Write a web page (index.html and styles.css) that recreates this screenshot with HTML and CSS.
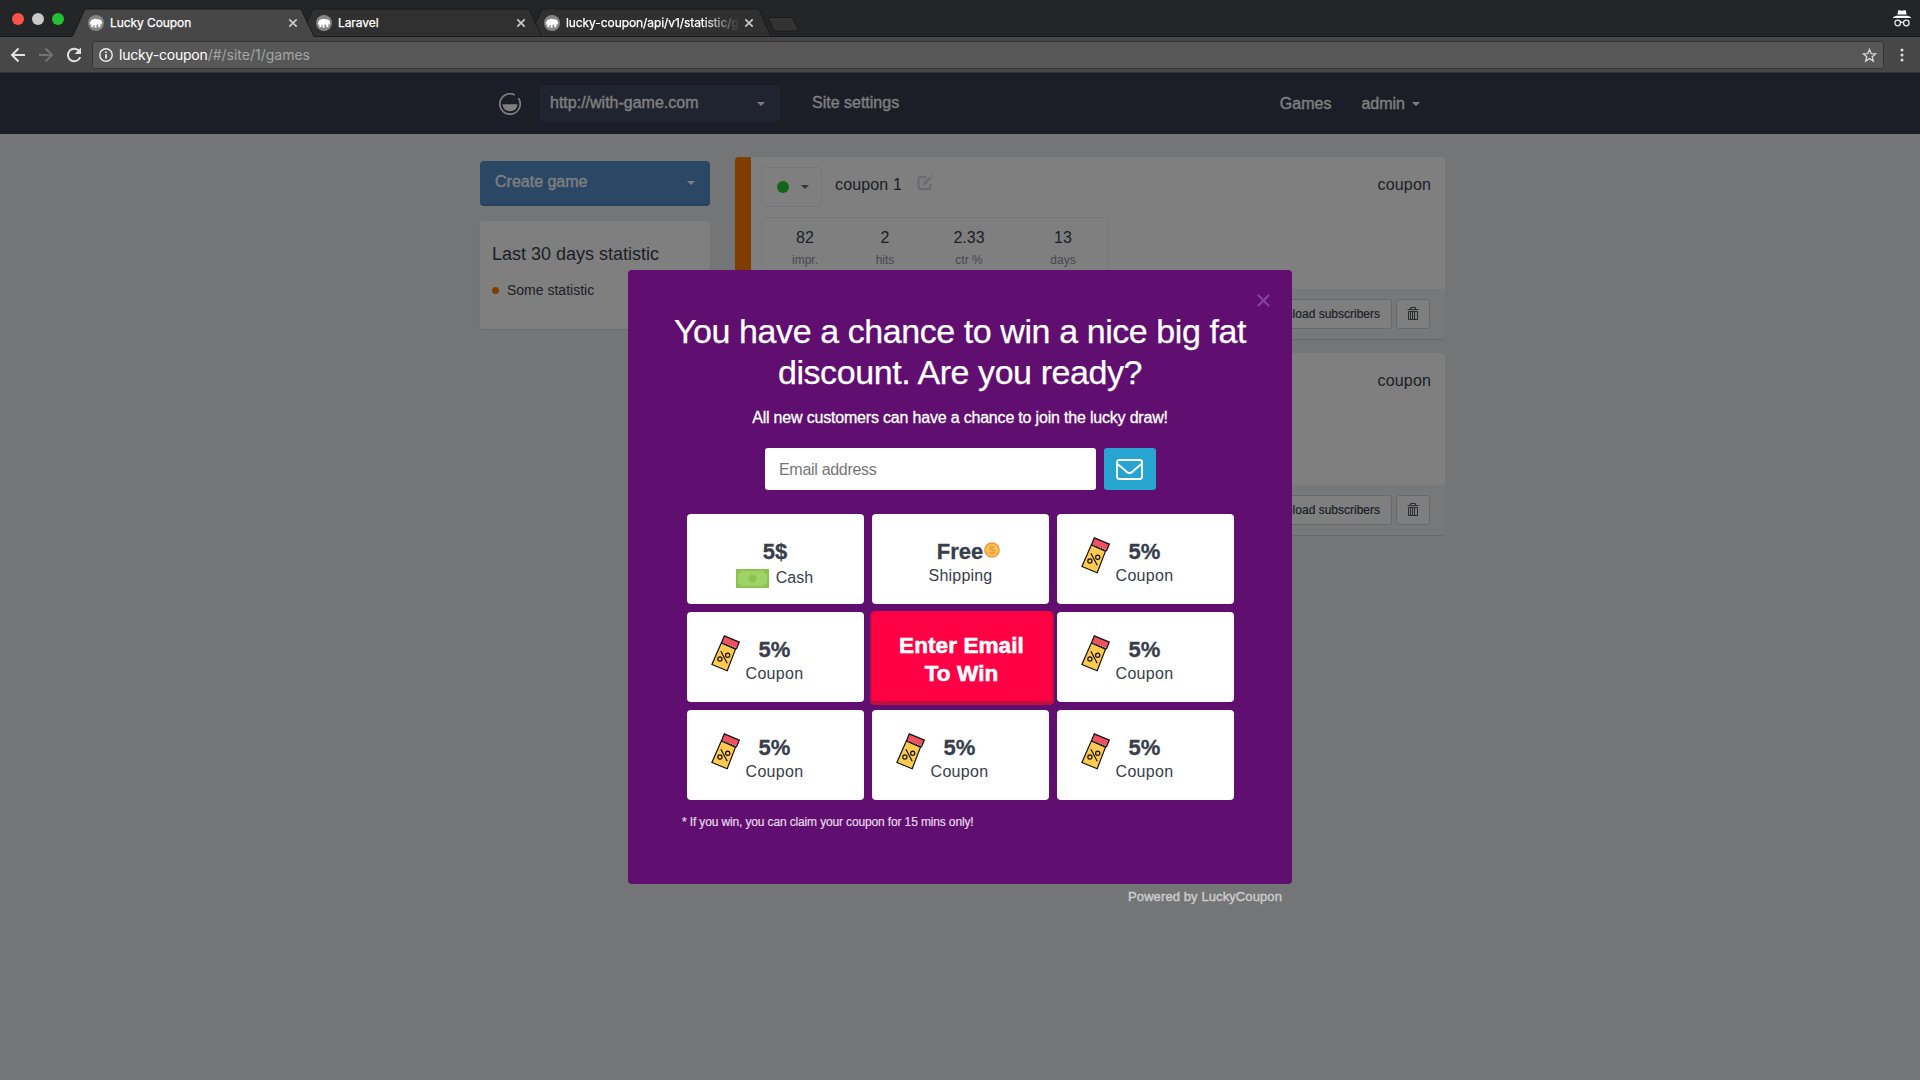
FILE: index.html
```html
<!DOCTYPE html>
<html lang="en">
<head>
<meta charset="utf-8">
<title>Lucky Coupon</title>
<link rel="stylesheet" href="styles.css">
</head>
<body>
<svg class="defs" width="0" height="0">
  <symbol id="favicon" viewBox="0 0 16 16">
    <circle cx="8" cy="8" r="8" fill="#858585"/>
    <path d="M1.800 9.300C2 6 3.600 4.300 6 4.200c1-.6 2.300-.5 3 .1 2.300-.6 4.900.6 5 3 .1 1-.1 1.900-.5 2.400l-.5-1.400c-.4.9-.6 2.700-.7 3.900h-2.100V9.600l-1.700.2v3H6.600v-2.600l-1-.5-.4 2.600H3.300c.1-1.500 0-2.700-.3-3.700l-.5 1.400z" fill="#fff"/>
  </symbol>
  <symbol id="close" viewBox="0 0 10 10"><path d="M1.300 1.300l7.400 7.400M8.700 1.300L1.300 8.700" stroke="#c8c8c8" stroke-width="1.700"/></symbol>
  <symbol id="trash" viewBox="0 0 12 14">
    <path d="M.5 2.500h11M3.500 2.500v-2h5v2M1.500 4.500v8h9v-8zM3.500 4.500v8M5.500 4.500v8M7.500 4.500v8" fill="none" stroke="#555860" stroke-width="1"/>
  </symbol>
  <symbol id="coupon" viewBox="0 0 30 38">
    <path d="M10.300 8L.9 29.500l15.300 6.200 8.300-21.600z" fill="#ffca4f" stroke="#111" stroke-width="1.200"/>
    <path d="M13.300.9l15 6.200-2.400 6L10.500 7.500z" fill="#ef5160"/>
    <path d="M10.400 8l2.900-7.100 15 6.200-2.600 6.300-1.200.8" fill="none" stroke="#111" stroke-width="1.200"/>
    <path d="M10.500 7.900l15 5.600" fill="none" stroke="#111" stroke-width="1.200" stroke-dasharray="1.300 1.200"/>
    <g fill="none" stroke="#111" stroke-width="1.200"><path d="M9.900 16.200l6.300 12"/><circle cx="8.900" cy="24" r="2.100"/><circle cx="16.700" cy="20.300" r="2.100"/></g>
  </symbol>
</svg>
<div class="browser">
  <div class="tabstrip">
    <div class="lights"><i class="red"></i><i class="grey"></i><i class="green"></i></div>
    <svg class="tab-shapes" width="740" height="37" viewBox="70 0 740 37">
      <path d="M529 37l13-28h217l12 28z" fill="#303030" stroke="#1a1a1b"/>
      <path d="M300 37l13-28h216l13 28z" fill="#303030" stroke="#1a1a1b"/>
      <path d="M70 36.500h740" stroke="#18191a"/>
      <path d="M71 37.500l1.500-1 12.500-27.500h216l13 27.500 1.500 1z" fill="#474747" stroke="#1a1a1b"/>
      <path d="M72 37h242" stroke="#474747" stroke-width="1.500"/>
      <path d="M768 17.500h24l7 13.500h-25z" fill="#333" stroke="#1c1c1d"/>
    </svg>
    <div class="tab t1"><svg class="fav"><use href="#favicon"/></svg><span class="title">Lucky Coupon</span><svg class="x"><use href="#close"/></svg></div>
    <div class="tab t2"><svg class="fav"><use href="#favicon"/></svg><span class="title">Laravel</span><svg class="x"><use href="#close"/></svg></div>
    <div class="tab t3"><svg class="fav"><use href="#favicon"/></svg><span class="title fade">lucky-coupon/api/v1/statistic/g</span><svg class="x"><use href="#close"/></svg></div>
    <svg class="incognito" width="18" height="17" viewBox="0 0 18 17"><path d="M5.500 0l3.500.8L12.500 0l1.200 4.600H4.300z M3 5.800h12l3 1.500v.7H0v-.7z" fill="#fff"/><g fill="none" stroke="#e8e8e8" stroke-width="1.300"><circle cx="4.700" cy="13" r="2.800"/><circle cx="13.300" cy="13" r="2.800"/><path d="M7.500 12.600q1.500-1 3 0"/></g></svg>
  </div>
  <div class="toolbar">
    <svg class="nav-icons" width="92" height="36" viewBox="0 37 92 36" fill="none" stroke-width="2">
      <path d="M25 55H12.500M18.500 48.500L12 55l6.500 6.500" stroke="#e2e2e2"/>
      <path d="M39 55h12.500M45.500 48.500L52 55l-6.500 6.500" stroke="#727272"/>
      <path d="M79.500 51.500A6.300 6.300 0 1 0 80.200 57" stroke="#e2e2e2"/><path d="M81 47.500v6.500h-6.500z" fill="#e2e2e2"/>
    </svg>
    <div class="omnibox">
      <svg width="14" height="14" viewBox="0 0 14 14"><circle cx="7" cy="7" r="6.200" fill="none" stroke="#f0f0f0" stroke-width="1.400"/><path d="M7 6.200v4.200M7 3.400v1.700" stroke="#f0f0f0" stroke-width="1.800"/></svg>
      <span class="url"><b class="host">lucky-coupon</b><span class="path">/#/site/1/games</span></span>
      <svg class="star" width="15" height="15" viewBox="0 0 15 15"><path d="M7.500 1.500l1.700 4.100 4.400.3-3.400 2.800 1.100 4.300-3.800-2.400L3.700 13l1.100-4.300L1.400 5.900l4.400-.3z" fill="none" stroke="#d8d8d8" stroke-width="1.300"/></svg>
    </div>
    <svg class="menu" width="4" height="14" viewBox="0 0 4 14" fill="#ddd"><circle cx="2" cy="2" r="1.500"/><circle cx="2" cy="7" r="1.500"/><circle cx="2" cy="12" r="1.500"/></svg>
  </div>
</div>
<div class="viewport">
  <nav class="navbar">
    <svg class="logo" width="22" height="22" viewBox="0 0 22 22"><path d="M15.700 1.900A10.200 10.200 0 1 0 19.500 5.300" fill="none" stroke="#fff" stroke-width="1.700"/><path d="M3.500 11.200h15a7.500 7 0 0 1-15 0z" fill="#fff"/></svg>
    <div class="site-select"><span>http://with-game.com</span><i class="caret"></i></div>
    <a class="settings">Site settings</a>
    <a class="games">Games</a>
    <a class="admin">admin</a><i class="caret"></i>
  </nav>
  <main class="container">
    <aside>
      <div class="create"><span>Create game</span><i class="caret"></i></div>
      <section class="stat-card"><h2>Last 30 days statistic</h2><p><i></i><span>Some statistic</span></p></section>
    </aside>
    <div class="list">
      <article class="game">
        <div class="body">
          <div class="row">
            <div class="status"><i class="on"></i><i class="caret"></i></div>
            <span class="name">coupon 1</span>
            <svg class="edit" width="18" height="16" viewBox="0 0 18 16" fill="none" stroke="#d4d6de" stroke-width="2.200"><path d="M9 2.100H4a2.500 2.500 0 0 0-2.500 2.500v7A2.500 2.500 0 0 0 4 14.100h7a2.500 2.500 0 0 0 2.500-2.500V9"/><path d="M6.500 9.500l7-7" stroke-width="3"/><path d="M15 1.700l1-1" stroke-width="2.600"/></svg>
            <span class="kind">coupon</span>
          </div>
          <dl class="stats"><div class="c1"><dt>82</dt><dd>impr.</dd></div><div class="c2"><dt>2</dt><dd>hits</dd></div><div class="c3"><dt>2.33</dt><dd>ctr %</dd></div><div class="c4"><dt>13</dt><dd>days</dd></div></dl>
        </div>
        <footer><a class="btn">Download subscribers</a><a class="btn icon"><svg width="12" height="14"><use href="#trash"/></svg></a></footer>
      </article>
      <article class="game">
        <div class="body"><div class="row"><span class="kind">coupon</span></div></div>
        <footer><a class="btn">Download subscribers</a><a class="btn icon"><svg width="12" height="14"><use href="#trash"/></svg></a></footer>
      </article>
    </div>
  </main>
  <div class="overlay">
    <div class="modal">
      <svg class="dismiss" width="13" height="13" viewBox="0 0 13 13"><path d="M.8.8l11.400 11.400M12.200.8L.8 12.200" stroke="#85429a" stroke-width="2.200"/></svg>
      <h1>You have a chance to win a nice big fat<br>discount. Are you ready?</h1>
      <p class="lead">All new customers can have a chance to join the lucky draw!</p>
      <div class="form">
        <div class="input">Email address</div>
        <div class="send"><svg width="27" height="21" viewBox="0 0 27 21" fill="none" stroke="#fff" stroke-width="1.900"><rect x="1" y="1" width="25" height="19" rx="2.200"/><path d="M1 4.500c4 3.500 7 5.800 9.500 8.200q3 2.800 6 0C19 10.300 22 8 26 4.500"/></svg></div>
      </div>
      <div class="grid">
        <div class="cell cash"><b>5$</b><span class="line"><svg width="33" height="19" viewBox="0 0 33 19"><path d="M0 0h33v19H0z" fill="#8cc350"/><path d="M5 2h23q0 3 3 3v9q-3 0-3 3H5q0-3-3-3V5q3 0 3-3z" fill="#a0d367"/><circle cx="16.500" cy="9.500" r="4" fill="#8cc350"/></svg><em>Cash</em></span></div>
        <div class="cell ship"><b><span>Free</span><svg width="16" height="16" viewBox="0 0 16 16"><circle cx="8" cy="8" r="7.100" fill="#fdc44d" stroke="#eb9a45" stroke-width="1.500"/><text x="8" y="12" text-anchor="middle">$</text></svg></b><em>Shipping</em></div>
        <div class="cell pct"><svg width="30" height="38"><use href="#coupon"/></svg><b>5%</b><em>Coupon</em></div>
        <div class="cell pct"><svg width="30" height="38"><use href="#coupon"/></svg><b>5%</b><em>Coupon</em></div>
        <div class="cell go"><span>Enter Email</span><span>To Win</span></div>
        <div class="cell pct"><svg width="30" height="38"><use href="#coupon"/></svg><b>5%</b><em>Coupon</em></div>
        <div class="cell pct"><svg width="30" height="38"><use href="#coupon"/></svg><b>5%</b><em>Coupon</em></div>
        <div class="cell pct"><svg width="30" height="38"><use href="#coupon"/></svg><b>5%</b><em>Coupon</em></div>
        <div class="cell pct"><svg width="30" height="38"><use href="#coupon"/></svg><b>5%</b><em>Coupon</em></div>
      </div>
      <p class="note">* If you win, you can claim your coupon for 15 mins only!</p>
    </div>
    <p class="powered">Powered by LuckyCoupon</p>
  </div>
</div>
</body>
</html>
```
FILE: styles.css
```css
* { box-sizing: border-box; margin: 0; padding: 0; }
html, body { height: 1080px; overflow: hidden; }
body { position: relative; background: #e8eaee; font-family: "Liberation Sans", Arial, sans-serif; font-size: 16px; color: #383e4b; display: flex; flex-direction: column; }
i, em { font-style: normal; }
.defs { position: absolute; }

/* browser window */
.browser { font-family: Inter, Roboto, sans-serif; color: #fff; }
.tabstrip { position: relative; height: 37px; background: #242527; border-bottom: 1px solid #18191a; display: flex; align-items: flex-start; padding: 0 9px 0 12px; }
.lights { display: flex; gap: 8px; padding-top: 13px; width: 76px; z-index: 1; }
.lights i { width: 12px; height: 12px; border-radius: 50%; }
.red { background: #fc504a; }
.grey { background: #c9c9c9; }
.green { background: #23c234; }
.tab-shapes { position: absolute; left: 70px; top: 0; }
.tab { z-index: 1; display: flex; align-items: center; height: 28px; margin-top: 9px; width: 228px; font-size: 12px; }
.t3 { width: 227px; }
.fav { width: 16px; height: 16px; margin-right: 6px; flex: none; }
.title { white-space: nowrap; letter-spacing: -.08px; margin-top: -1px; -webkit-text-stroke: .25px #fff; }
.fade { width: 174px; overflow: hidden; mask-image: linear-gradient(90deg, #000 78%, transparent); }
.tab .x { width: 10px; height: 10px; margin-left: auto; margin-right: 18px; flex: none; }
.t3 .x { margin-right: 17px; }
.incognito { margin: 10px 0 0 auto; }
.toolbar { height: 36px; background: #474747; border-bottom: 1px solid #323233; display: flex; align-items: flex-start; }
.omnibox { width: 1792px; height: 28px; margin-top: 4px; border: 1px solid #353535; border-radius: 3px; background: #575757; display: flex; align-items: center; padding: 0 6px; }
.url { margin: -1px 0 0 6px; font-size: 14px; }
.host { font-weight: 400; letter-spacing: -.2px; }
.path { color: #a5a5a5; }
.star { margin-left: auto; }
.menu { margin: 11px 0 0 16px; }

/* page */
.viewport { position: relative; flex: 1; }
.navbar { height: 61px; background: #383d4e; padding: 0 500px 0 499px; display: flex; align-items: center; color: #fff; line-height: 20px; }
.logo { margin-top: 1px; }
.caret { width: 0; height: 0; border: 4px solid transparent; border-top-color: currentColor; border-bottom: 0; }
.site-select { width: 240px; height: 37px; margin-left: 19px; background: #414960; border-radius: 4px; padding: 0 15px 0 10px; display: flex; align-items: center; justify-content: space-between; }
.site-select span, .settings, .games, .admin { -webkit-text-stroke: .3px; }
.site-select span, .settings { margin-top: -2px; }
.settings { margin-left: 32px; }
.games { margin-left: auto; }
.admin { margin-left: 30px; }
.admin + .caret { margin-left: 7px; }
.container { width: 965px; margin-left: 480px; display: flex; gap: 25px; align-items: flex-start; padding-top: 23px; }
aside { width: 230px; padding-top: 4px; }
.create { height: 45px; background: #548ecb; border-bottom: 2px solid #4680bd; border-radius: 4px; color: #fff; padding: 0 15px; display: flex; align-items: center; justify-content: space-between; -webkit-text-stroke: .3px; }
.create span { margin-top: -1px; }
.stat-card { margin-top: 15px; height: 108px; background: #fff; border-radius: 4px; padding: 23px 12px; box-shadow: 0 1px 1px #d4d6da; }
.stat-card h2 { font-size: 18px; font-weight: 400; line-height: 20px; }
.stat-card p { display: flex; align-items: center; gap: 8px; font-size: 14px; line-height: 20px; margin-top: 16px; }
.stat-card i { width: 7px; height: 7px; border-radius: 50%; background: #ff7d00; }
.list { width: 710px; }
.game { height: 182px; margin-bottom: 14px; background: #fff; border-left: 16px solid #ff7d00; border-radius: 4px; display: flex; flex-direction: column; box-shadow: 0 1px 1px #d0d2d6; }
.body { height: 132px; padding: 10px 14px 0 10px; overflow: hidden; flex: none; }
.row { display: flex; height: 40px; }
.status { width: 61px; height: 40px; border: 1px solid #eceef2; border-radius: 4px; display: flex; align-items: center; padding-left: 15px; }
.status .caret { color: #666a74; }
.on { width: 12px; height: 12px; border-radius: 50%; background: #24c82e; margin-right: 12px; }
.name, .kind { line-height: 36px; letter-spacing: .15px; }
.name { margin-left: 13px; }
.edit { margin: 8px 0 0 15px; }
.kind { margin-left: auto; }
.stats { width: 347px; height: 70px; margin-top: 10px; border: 1px solid #eceef2; border-radius: 4px; padding: 8px 0 0 3px; display: flex; text-align: center; }
.c1 { width: 80px; } .c2 { width: 80px; } .c3 { width: 88px; } .c4 { width: 100px; margin-right: -5px; }
.stats div { flex: none; }
.stats dt { line-height: 24px; }
.stats dd { font-size: 12px; line-height: 18px; margin-top: 1px; color: #8d93a0; }
.game footer { flex: 1; background: #eff1f5; border-radius: 0 0 4px 0; display: flex; justify-content: flex-end; gap: 4px; padding: 10px 15px; }
.btn { height: 30px; border: 1px solid #d0d2d8; border-radius: 3px; background: #fff; font-size: 12px; line-height: 28px; padding: 0 11px; -webkit-text-stroke: .2px; }
.icon { width: 34px; padding: 7px 0 0 10px; line-height: 0; }

/* popup */
.overlay { position: absolute; inset: 0; background: rgba(0, 0, 0, .5); padding: 197px 0 0 628px; }
.modal { position: relative; width: 664px; height: 614px; background: #600f70; border-radius: 4px; color: #fff; padding-top: 41px; }
.dismiss { position: absolute; right: 22px; top: 24px; }
h1 { font-size: 34px; font-weight: 400; line-height: 41px; letter-spacing: -.42px; text-align: center; white-space: nowrap; -webkit-text-stroke: .25px; }
.lead { line-height: 24px; margin-top: 13px; text-align: center; letter-spacing: -.19px; -webkit-text-stroke: .3px; }
.form { display: flex; gap: 8px; margin: 18px 0 0 137px; height: 42px; }
.input { width: 331px; background: #fff; border-radius: 3px; color: #777; line-height: 43px; letter-spacing: -.3px; padding-left: 14px; }
.send { width: 52px; background: #26a5d1; border-radius: 3px; display: flex; align-items: center; justify-content: center; }
.send svg { margin-left: -1px; }
.grid { display: grid; grid-template-columns: repeat(3, 177px); grid-auto-rows: 90px; gap: 8px; margin: 24px 0 0 59px; }
.cell { background: #fff; border-radius: 4px; color: #383e4b; text-align: center; display: flex; flex-direction: column; align-items: center; padding-top: 26px; }
.cell b { font-size: 22px; line-height: 24px; -webkit-text-stroke: .3px; }
.cell em { line-height: 24px; }
.cash b { margin-left: -1px; }
.line { display: flex; align-items: center; gap: 7px; margin: 2px 0 0 -2px; }
.ship b { display: flex; align-items: center; gap: 1px; margin-left: 16px; }
.ship svg { margin-top: -4px; }
.ship em { letter-spacing: .2px; }
.ship text { font: 700 11px "Liberation Sans", sans-serif; fill: #eb9a45; -webkit-text-stroke: 0; }
.pct { display: grid; grid-template-columns: 30px 67px; grid-template-rows: 24px 24px; justify-content: start; align-content: start; padding-left: 24px; }
.pct svg { grid-row: 1 / 3; align-self: start; margin-top: -3px; }
.pct em { letter-spacing: .3px; }
.go { width: 184px; height: 94px; margin: -1px 0 0 -2px; background: #ff0045; border-radius: 5px; box-shadow: inset 2px 0 #c0103c, inset -2px 0 #c0103c, inset 0 -4px #c0103c; color: #fff; font-size: 22.5px; font-weight: 700; line-height: 28px; letter-spacing: .1px; padding: 21px 1px 0 0; z-index: 1; -webkit-text-stroke: .6px; }
.note { margin: 13px 0 0 54px; font-size: 12px; line-height: 18px; letter-spacing: -.14px; color: #e6d8ea; -webkit-text-stroke: .2px; }
.powered { width: 654px; margin-top: 4px; text-align: right; font-size: 13px; line-height: 18px; letter-spacing: .1px; color: #ccc; -webkit-text-stroke: .4px; }
```
